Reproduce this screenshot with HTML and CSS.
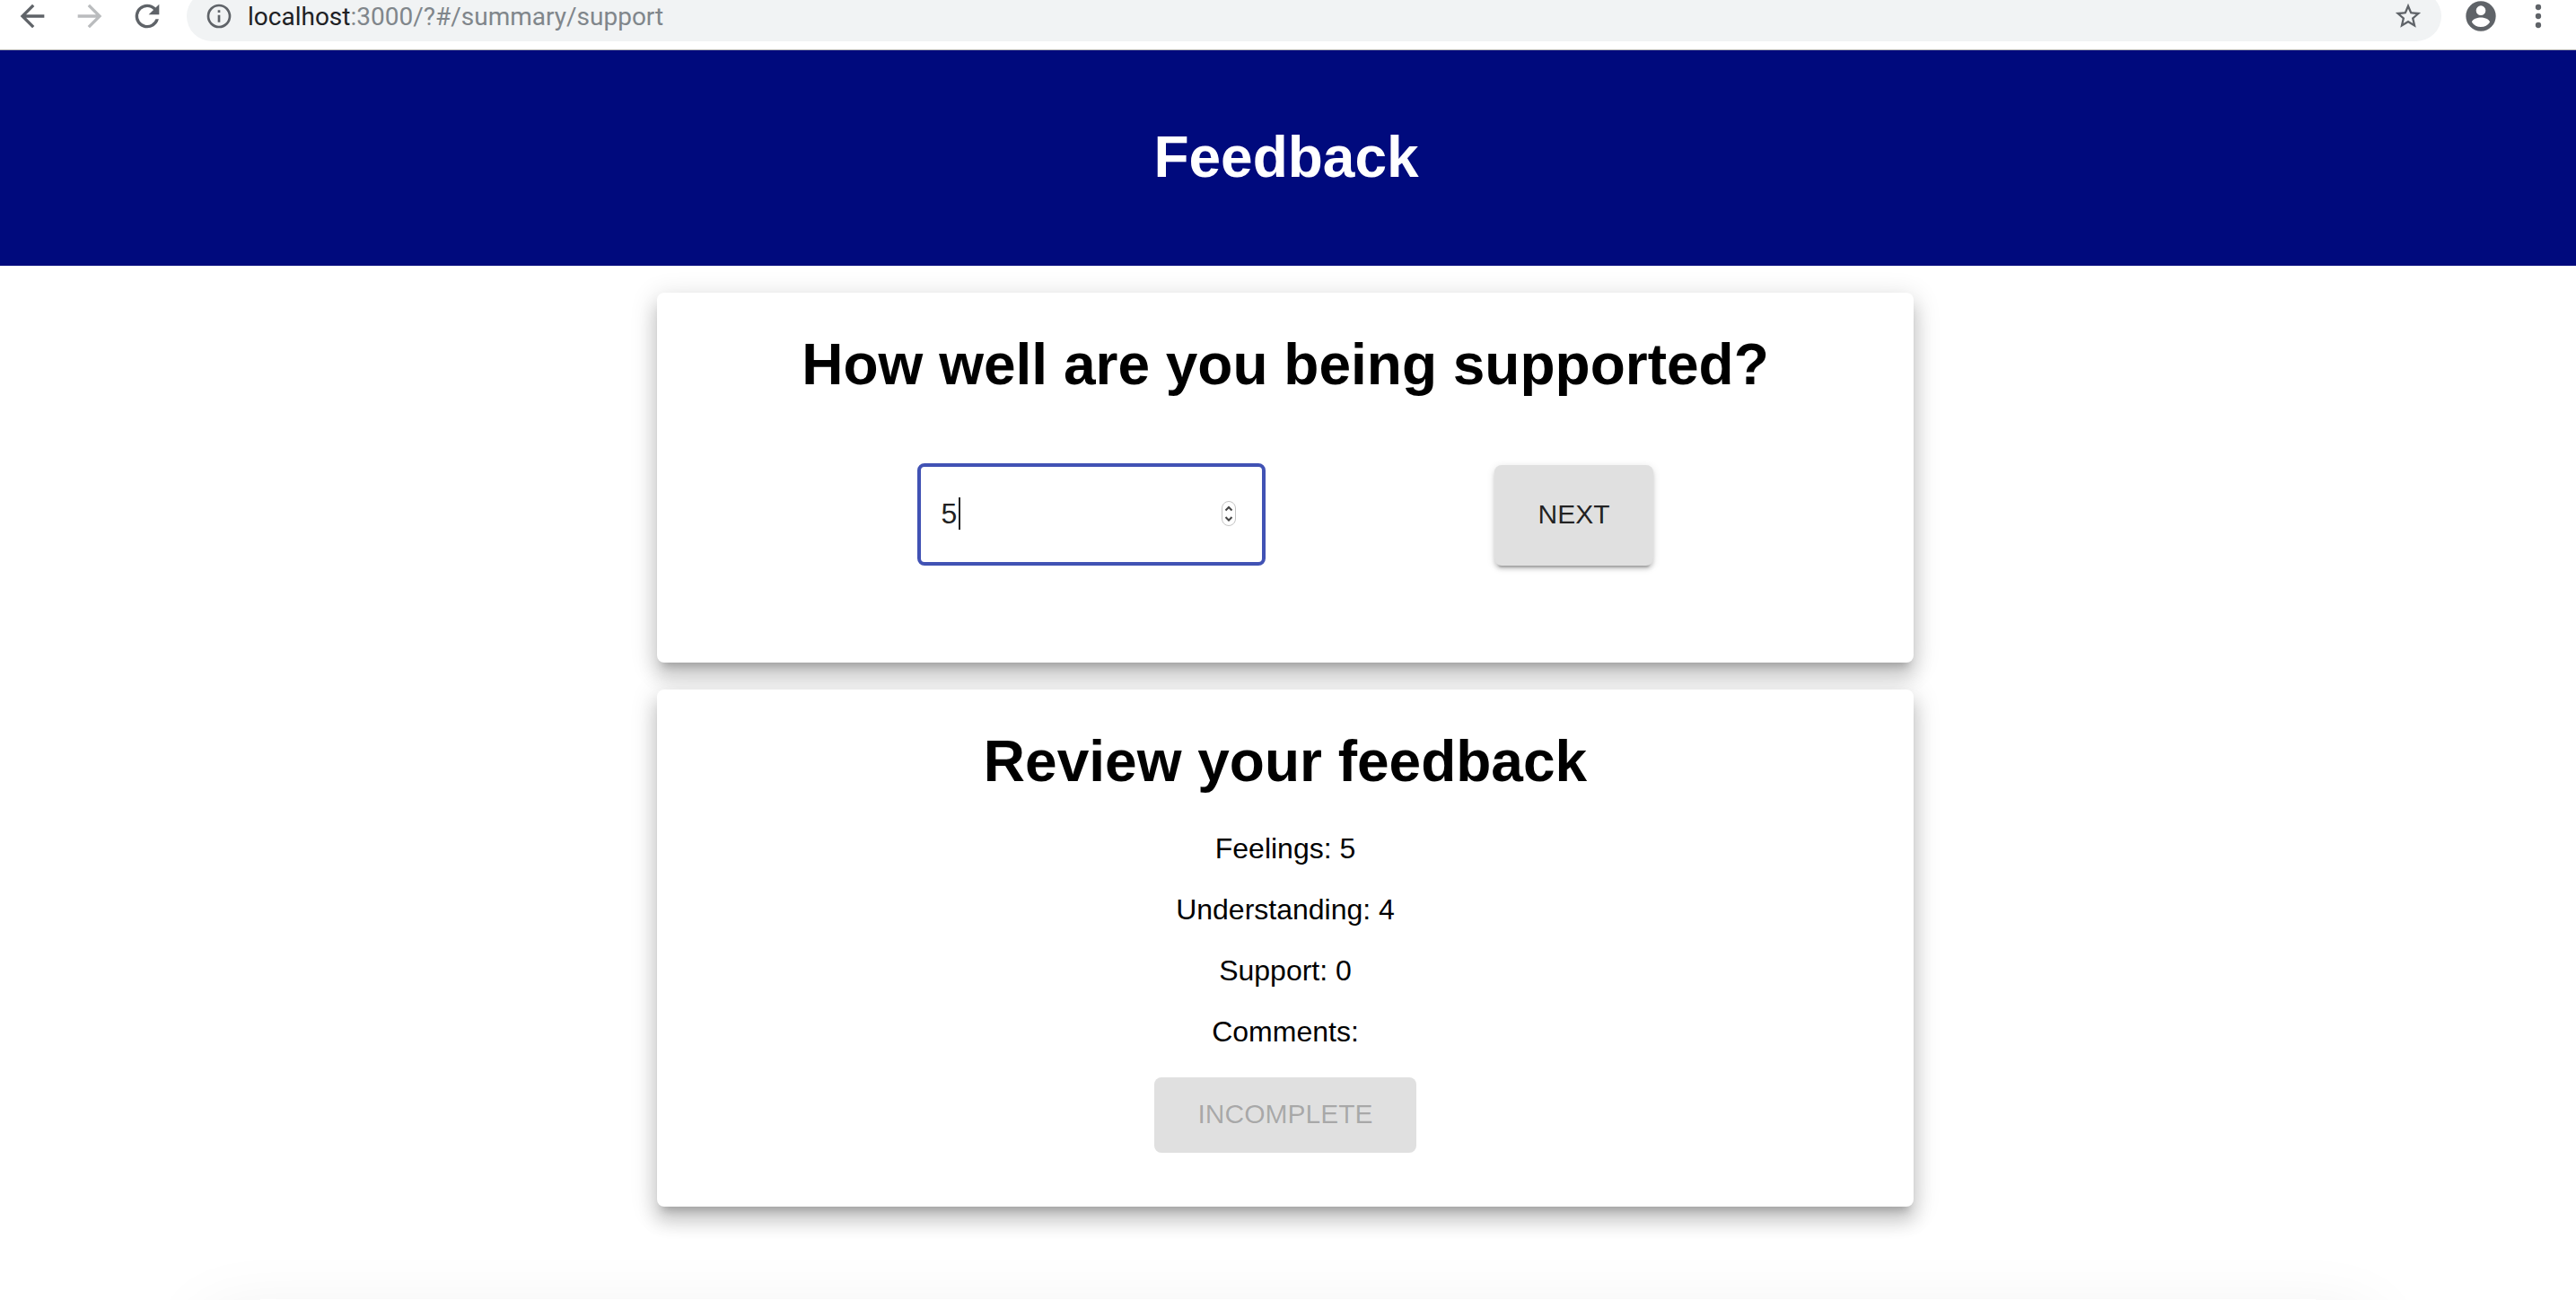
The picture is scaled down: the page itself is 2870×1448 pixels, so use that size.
FILE: index.html
```html
<!DOCTYPE html>
<html lang="en">
<head>
<meta charset="utf-8">
<title>Feedback</title>
<link rel="stylesheet" href="styles.css">
</head>
<body>
<div class="toolbar">
  <button class="tool" type="button" aria-label="Back"><svg class="icon" viewBox="0 0 24 24"><path d="M20 11H7.830l5.590-5.590L12 4l-8 8 8 8 1.410-1.410L7.830 13H20v-2z"/></svg></button>
  <button class="tool tool-off" type="button" aria-label="Forward" disabled><svg class="icon" viewBox="0 0 24 24"><path d="M12 4l-1.410 1.410L16.170 11H4v2h12.170l-5.580 5.590L12 20l8-8z"/></svg></button>
  <button class="tool" type="button" aria-label="Reload"><svg class="icon" viewBox="0 0 24 24"><path d="M17.650 6.350A7.960 7.960 0 0 0 12 4a8 8 0 1 0 7.730 10h-2.080A6 6 0 1 1 12 6c1.660 0 3.140.690 4.220 1.780L13 11h7V4l-2.350 2.350z"/></svg></button>
  <div class="address">
    <svg class="icon-info" viewBox="0 0 24 24"><path d="M11 7h2v2h-2zm0 4h2v6h-2zm1-9a10 10 0 1 0 0 20 10 10 0 0 0 0-20zm0 18a8 8 0 1 1 0-16 8 8 0 0 1 0 16z"/></svg>
    <span class="url"><span class="host">localhost</span>:3000/?#/summary/support</span>
    <button class="star" type="button" aria-label="Bookmark"><svg class="icon-star" viewBox="0 0 24 24"><path d="M22 9.240l-7.190-.620L12 2 9.190 8.630 2 9.240l5.460 4.730L5.820 21 12 17.270 18.180 21l-1.630-7.030L22 9.240zM12 15.400l-3.760 2.270 1-4.280-3.320-2.880 4.380-.380L12 6.100l1.710 4.040 4.380.380-3.320 2.880 1 4.280L12 15.400z"/></svg></button>
  </div>
  <button class="tool" type="button" aria-label="Profile"><svg class="icon" viewBox="0 0 24 24"><path d="M12 2a10 10 0 1 0 0 20 10 10 0 0 0 0-20zm0 3a3.200 3.200 0 1 1 0 6.400A3.200 3.200 0 0 1 12 5zm0 14.200a7.200 7.200 0 0 1-6-3.220c.030-1.990 4-3.080 6-3.080s5.970 1.090 6 3.080a7.200 7.200 0 0 1-6 3.220z"/></svg></button>
  <button class="tool" type="button" aria-label="Menu"><svg class="icon" viewBox="0 0 24 24"><circle cx="12" cy="6" r="1.900"/><circle cx="12" cy="12" r="1.900"/><circle cx="12" cy="18" r="1.900"/></svg></button>
</div>
<header class="header"><h1 class="title">Feedback</h1></header>
<main class="content">
  <section class="card">
    <h1 class="heading" id="question">How well are you being supported?</h1>
    <form class="answer">
      <div class="field">
        <input class="number" type="number" value="5" aria-labelledby="question">
        <span class="caret"></span>
        <svg class="spinner" viewBox="0 0 16 28"><rect x="0.5" y="0.5" width="15" height="27" rx="7.5"/><path d="M4.500 10.500L8 7l3.500 3.500M4.500 18L8 21.500l3.500-3.500"/></svg>
      </div>
      <button class="button button-next" type="button">NEXT</button>
    </form>
  </section>
  <section class="card card-review">
    <h1 class="heading">Review your feedback</h1>
    <p class="line">Feelings: 5</p>
    <p class="line">Understanding: 4</p>
    <p class="line">Support: 0</p>
    <p class="line">Comments:</p>
    <button class="button" type="button" disabled>INCOMPLETE</button>
  </section>
</main>
<div class="edge-shadow"></div>
</body>
</html>
```

FILE: styles.css
```css
* {
  box-sizing: border-box;
}

body {
  margin: 0;
  min-height: 100vh;
  display: flex;
  flex-direction: column;
  overflow: hidden;
  background: #fff;
  color: #000;
  font-family: "Liberation Sans", Arial, sans-serif;
}

button {
  border: 0;
  font-family: inherit;
}

svg {
  display: block;
}

/* Browser toolbar, cut off by the top of the window */
.toolbar {
  display: flex;
  align-items: center;
  gap: 24px;
  margin-top: -10px;
  padding: 0 22px 9px 16px;
  border-bottom: 1px solid #b4b4b4;
}

.tool,
.star {
  padding: 0;
  background: none;
  color: #5f6368;
}

.tool-off {
  color: #babcbe;
}

.icon {
  width: 40px;
  height: 40px;
  fill: currentColor;
}

.address {
  flex: 1;
  display: flex;
  align-items: center;
  height: 56px;
  padding: 0 20px;
  border-radius: 28px;
  background: #f1f3f4;
}

.icon-info {
  width: 32px;
  height: 32px;
  fill: #5f6368;
}

.url {
  flex: 1;
  padding: 2px 0 0 16px;
  color: #80868b;
  font: 28px/36px Roboto, sans-serif;
}

.host {
  color: #202124;
}

.icon-star {
  width: 34px;
  height: 34px;
  fill: currentColor;
}

.header {
  padding: 82px 4px 84px 0;
  background: #000a7d;
  color: #fff;
  text-align: center;
}

.title,
.heading {
  margin: 0;
  font-size: 64px;
  line-height: 74px;
}

.content {
  display: flex;
  flex-direction: column;
  align-items: center;
  gap: 30px;
  padding: 30px 6px 30px 0;
}

.card {
  width: 100%;
  max-width: 1400px;
  padding: 43px 0 108px;
  border-radius: 8px;
  background: #fff;
  text-align: center;
  box-shadow:
    0 10px 10px -6px rgba(0, 0, 0, 0.2),
    0 16px 20px 2px rgba(0, 0, 0, 0.14),
    0 6px 28px 4px rgba(0, 0, 0, 0.12);
}

.card-review {
  padding-bottom: 60px;
}

.heading {
  margin-bottom: 42px;
}

.answer {
  display: flex;
  justify-content: center;
  align-items: flex-end;
  gap: 255px;
  padding-top: 31px;
}

.field {
  position: relative;
  width: 388px;
}

.number {
  display: block;
  width: 100%;
  height: 114px;
  padding: 0 22px 2px;
  border: 4px solid #4152b4;
  border-radius: 8px;
  outline: 0;
  background: #fff;
  color: #212121;
  font: 32px/36px "Liberation Sans", Arial, sans-serif;
  appearance: textfield;
}

.number::-webkit-inner-spin-button {
  display: none;
}

.caret {
  position: absolute;
  top: 38px;
  left: 46px;
  width: 2px;
  height: 36px;
  background: #212121;
}

.spinner {
  position: absolute;
  top: 42px;
  right: 33px;
  width: 16px;
  height: 28px;
  fill: none;
  stroke: #444;
  stroke-width: 2;
}

.spinner rect {
  fill: #fff;
  stroke: #c4c4c4;
  stroke-width: 1;
}

.line {
  margin: 0 0 32px;
  font-size: 32px;
  line-height: 36px;
}

.button {
  margin-top: 1px;
  padding: 15px 48px 17px;
  border-radius: 8px;
  background: #e0e0e0;
  color: rgba(0, 0, 0, 0.87);
  font-size: 30px;
  line-height: 52px;
}

.button:disabled {
  color: rgba(0, 0, 0, 0.26);
}

.button-next {
  height: 112px;
  box-shadow:
    0 6px 2px -4px rgba(0, 0, 0, 0.2),
    0 4px 4px 0 rgba(0, 0, 0, 0.14),
    0 2px 10px 0 rgba(0, 0, 0, 0.12);
}

/* Soft shadow rising from below the window */
.edge-shadow {
  height: 1px;
  margin: auto 290px 0;
  box-shadow: 0 80px 80px 60px rgba(0, 0, 0, 0.08);
}
```
